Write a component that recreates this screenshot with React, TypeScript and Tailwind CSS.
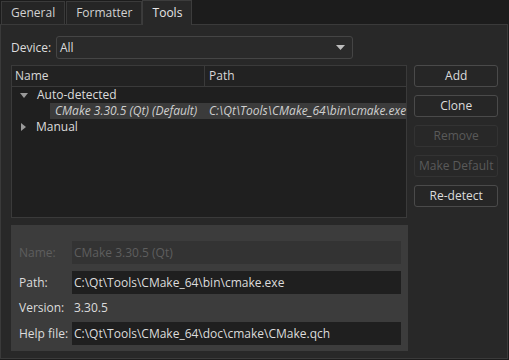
import React from 'react';

const font = {fontFamily: '"Open Sans", "Noto Sans", sans-serif'};

function Tab({label, active}: {label: string; active?: boolean}) {
  if (active) {
    return (
      <div className="relative z-10 -mb-px flex h-[25px] w-[50px] items-center justify-center border border-b-0 border-[#3c3c3c] bg-[#282828] text-[#e6e6e6]">
        {label}
      </div>
    );
  }
  return (
    <div className="mt-[1px] flex h-[23px] items-center border border-b-0 border-[#3a3a3a] bg-[#252525] px-[9px] text-[#d2d2d2]">
      {label}
    </div>
  );
}

function SideButton({label, disabled}: {label: string; disabled?: boolean}) {
  return (
    <div
      className={
        'flex h-[22px] w-[84px] items-center justify-center rounded-[3px] border ' +
        (disabled ? 'border-[#333333] text-[#5a5a5a]' : 'border-[#4a4a4a] bg-[#262626] text-[#dcdcdc]')
      }
    >
      {label}
    </div>
  );
}

function Field({value, disabled}: {value: string; disabled?: boolean}) {
  return (
    <div
      className={
        'flex h-[23px] flex-1 items-center px-[2px] ' +
        (disabled ? 'bg-[#333333] text-[#5e5e5e]' : 'bg-[#1f1f1f] text-[#dcdcdc]')
      }
    >
      {value}
    </div>
  );
}

export default function App() {
  return (
    <div className="h-[360px] w-[509px] overflow-hidden bg-[#1c1c1c] text-[12px] leading-none" style={font}>
      <div className="flex h-[24px] pl-[1px]">
        <Tab label="General" />
        <div className="w-[1px]" />
        <Tab label="Formatter" />
        <Tab label="Tools" active />
      </div>

      <div className="h-[335px] w-[508px] border border-[#3a3a3a] bg-[#282828] px-[10px] pt-[11px]">
        <div className="flex h-[23px] items-center">
          <span className="w-[45px] text-[#dcdcdc]">Device:</span>
          <div className="flex h-[23px] w-[297px] items-center justify-between rounded-[3px] border border-[#454545] bg-[#2a2a2a] pl-[3px] pr-[7px] text-[#dcdcdc]">
            <span>All</span>
            <svg width="9" height="5" viewBox="0 0 9 5">
              <path d="M0 0h9L4.5 5z" fill="#bdbdbd" />
            </svg>
          </div>
        </div>

        <div className="mt-[6px] flex gap-[7px]">
          <div className="h-[153px] w-[397px] border border-[#3a3a3a] bg-[#1f1f1f]">
            <div className="flex h-[21px] border-b border-[#3a3a3a] bg-[#222222] text-[#d8d8d8]">
              <div className="flex w-[193px] items-center border-r border-[#3a3a3a] pl-[3px]">Name</div>
              <div className="flex items-center pl-[4px]">Path</div>
            </div>
            <div className="flex h-[16px] items-center text-[#dcdcdc]">
              <svg className="ml-[8px] mr-[9px]" width="8" height="5" viewBox="0 0 8 5">
                <path d="M0 0h8L4 5z" fill="#9a9a9a" />
              </svg>
              <span>Auto-detected</span>
            </div>
            <div className="flex h-[16px] items-center italic text-[#cfcfcf]">
              <div className="w-[38px]" />
              <div className="flex h-full w-[155px] items-center bg-[#3b3b3b] pl-[5px]">CMake 3.30.5 (Qt) (Default)</div>
              <div className="flex h-full flex-1 items-center bg-[#3b3b3b] pl-[4px]">C:\Qt\Tools\CMake_64\bin\cmake.exe</div>
            </div>
            <div className="flex h-[16px] items-center text-[#dcdcdc]">
              <svg className="ml-[9px] mr-[10px]" width="5" height="8" viewBox="0 0 5 8">
                <path d="M0 0v8l5-4z" fill="#9a9a9a" />
              </svg>
              <span>Manual</span>
            </div>
          </div>

          <div className="flex flex-col gap-[8px]">
            <SideButton label="Add" />
            <SideButton label="Clone" />
            <SideButton label="Remove" disabled />
            <SideButton label="Make Default" disabled />
            <SideButton label="Re-detect" />
          </div>
        </div>

        <div className="mt-[7px] flex h-[126px] w-[397px] flex-col bg-[#3c3c3c] pl-[8px] pr-[7px] pt-[16px]">
          <div className="flex items-center">
            <span className="w-[53px] text-[#5e5e5e]">Name:</span>
            <Field value="CMake 3.30.5 (Qt)" disabled />
          </div>
          <div className="mt-[7px] flex items-center">
            <span className="w-[53px] text-[#dcdcdc]">Path:</span>
            <Field value="C:\Qt\Tools\CMake_64\bin\cmake.exe" />
          </div>
          <div className="flex h-[28px] items-center">
            <span className="w-[53px] text-[#dcdcdc]">Version:</span>
            <span className="pl-[2px] text-[#dcdcdc]">3.30.5</span>
          </div>
          <div className="flex items-center">
            <span className="w-[53px] text-[#dcdcdc]">Help file:</span>
            <Field value="C:\Qt\Tools\CMake_64\doc\cmake\CMake.qch" />
          </div>
        </div>
      </div>
    </div>
  );
}
